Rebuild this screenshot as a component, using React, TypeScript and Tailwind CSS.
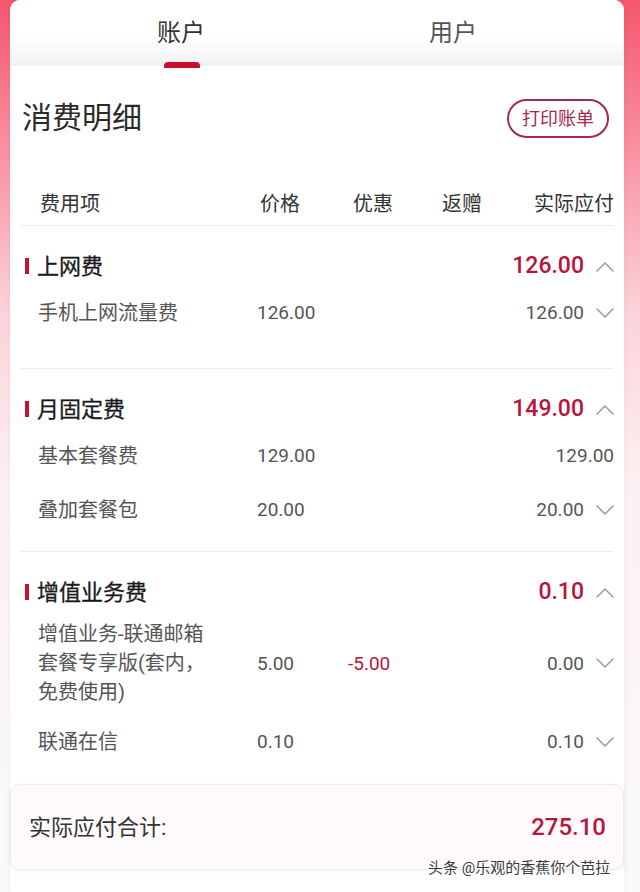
import React from "react";

const FONT = "Roboto, 'Noto Sans CJK SC', 'Noto Sans', sans-serif";
const RED = "#b8153d";

function Chevron({ up }: { up?: boolean }) {
  return (
    <svg width="18" height="11" viewBox="0 0 18 11" className="shrink-0">
      <polyline
        points={up ? "1,10 9,2 17,10" : "1,1 9,9 17,1"}
        fill="none"
        stroke="#9a9a9a"
        strokeWidth="1.5"
        strokeLinecap="round"
        strokeLinejoin="round"
      />
    </svg>
  );
}

type Row = {
  name: string;
  price: string;
  discount?: string;
  actual: string;
  chevron: boolean;
  multi?: boolean;
};

function SubRow({ r }: { r: Row }) {
  return (
    <div
      className={
        "grid grid-cols-[237px_91px_94px_1fr] items-center text-[20px] text-[#555] " +
        (r.multi ? "py-[8px] leading-[29px]" : "h-[54px] leading-[30px]")
      }
    >
      <div className="pl-[18px]">
        <div className="w-[180px]">{r.name}</div>
      </div>
      <div className="text-[19px]">{r.price}</div>
      <div className="text-[19px] text-[#b8153d]">{r.discount ?? ""}</div>
      <div className="flex items-center justify-end text-[19px]">
        <span>{r.actual}</span>
        {r.chevron && (
          <span className="ml-[12px] flex items-center">
            <Chevron />
          </span>
        )}
      </div>
    </div>
  );
}

function Section({
  title,
  total,
  rows,
  pb,
  last,
}: {
  title: string;
  total: string;
  rows: Row[];
  pb: string;
  last?: boolean;
}) {
  return (
    <div className={(last ? "" : "border-b border-[#ececec] ") + "pt-[20px] " + pb}>
      <div className="flex h-[40px] items-center">
        <div className="ml-[5px] h-[16px] w-[4px] bg-[#c8102e]" />
        <div className="ml-[8px] text-[22px] text-[#1a1a1a] [-webkit-text-stroke:0.3px_#1a1a1a]">{title}</div>
        <div className="ml-auto flex items-center">
          <span className="text-[23px] font-medium" style={{ color: RED }}>
            {total}
          </span>
          <span className="ml-[12px] flex items-center">
            <Chevron up />
          </span>
        </div>
      </div>
      {rows.map((r, i) => (
        <SubRow key={i} r={r} />
      ))}
    </div>
  );
}

export default function App() {
  return (
    <div
      className="relative h-[892px] w-[640px] overflow-hidden bg-[linear-gradient(to_bottom,#f5566e_0%,#f98a9c_15%,#fcd3da_35%,#fdf1f3_55%,#fafafa_100%)]"
      style={{ fontFamily: FONT }}
    >
      <div className="ml-[10px] w-[614px] rounded-t-[10px] bg-white shadow-[0_0_6px_rgba(0,0,0,0.06)]">
        {/* Tabs */}
        <div className="relative flex h-[66px] items-center rounded-t-[10px] bg-[linear-gradient(to_bottom,#ffffff_0%,#ffffff_55%,#f1f1f1_100%)]">
          <div className="ml-[131px] w-[80px] text-center text-[24px] text-[#333]">账户</div>
          <div className="ml-[192px] w-[80px] text-center text-[24px] text-[#555]">用户</div>
          <div className="absolute left-[154px] top-[62px] h-[6px] w-[36px] rounded-t-[4px] bg-[#c8102e]" />
        </div>

        {/* Content */}
        <div className="bg-white pb-[30px]">
          <div className="flex h-[40px] items-center pl-[12px] pr-[15px] mt-[32px]">
            <div className="text-[30px] text-[#2a2a2a] leading-[40px]">消费明细</div>
            <div className="ml-auto flex h-[39px] w-[102px] items-center justify-center rounded-full border-2 border-[#a8284c] text-[18px] text-[#a8284c]">
              打印账单
            </div>
          </div>

          <div className="mx-[10px] mt-[44px]">
            <div className="grid h-[44px] grid-cols-[237px_91px_94px_1fr] items-center border-b border-[#ececec] text-[20px] text-[#333]">
              <div className="pl-[20px]">费用项</div>
              <div className="pl-[3px]">价格</div>
              <div className="pl-[5px]">优惠</div>
              <div className="flex">
                <span>返赠</span>
                <span className="ml-auto">实际应付</span>
              </div>
            </div>

            <Section
              title="上网费"
              total="126.00"
              pb="pb-[28px]"
              rows={[{ name: "手机上网流量费", price: "126.00", actual: "126.00", chevron: true }]}
            />
            <Section
              title="月固定费"
              total="149.00"
              pb="pb-[14px]"
              rows={[
                { name: "基本套餐费", price: "129.00", actual: "129.00", chevron: false },
                { name: "叠加套餐包", price: "20.00", actual: "20.00", chevron: true },
              ]}
            />
            <Section
              title="增值业务费"
              total="0.10"
              pb="pb-0"
              last
              rows={[
                {
                  name: "增值业务-联通邮箱套餐专享版(套内，免费使用)",
                  price: "5.00",
                  discount: "-5.00",
                  actual: "0.00",
                  chevron: true,
                  multi: true,
                },
                { name: "联通在信", price: "0.10", actual: "0.10", chevron: true },
              ]}
            />
          </div>

          <div className="mt-[15px] flex h-[86px] items-center rounded-[10px] border border-[#ececec] bg-[#fffafb] pl-[18px] pr-[17px] shadow-[0_1px_4px_rgba(0,0,0,0.05)]">
            <div className="text-[22px] text-[#333]">实际应付合计:</div>
            <div className="ml-auto text-[24px] font-medium" style={{ color: RED }}>
              275.10
            </div>
          </div>
        </div>
      </div>

      <div className="absolute left-[428px] top-[857px] text-[15px] text-[#3a3a3a] [text-shadow:0_0_2px_#fff,0_0_2px_#fff,0_0_3px_#fff]">
        头条 @乐观的香蕉你个芭拉
      </div>
    </div>
  );
}
